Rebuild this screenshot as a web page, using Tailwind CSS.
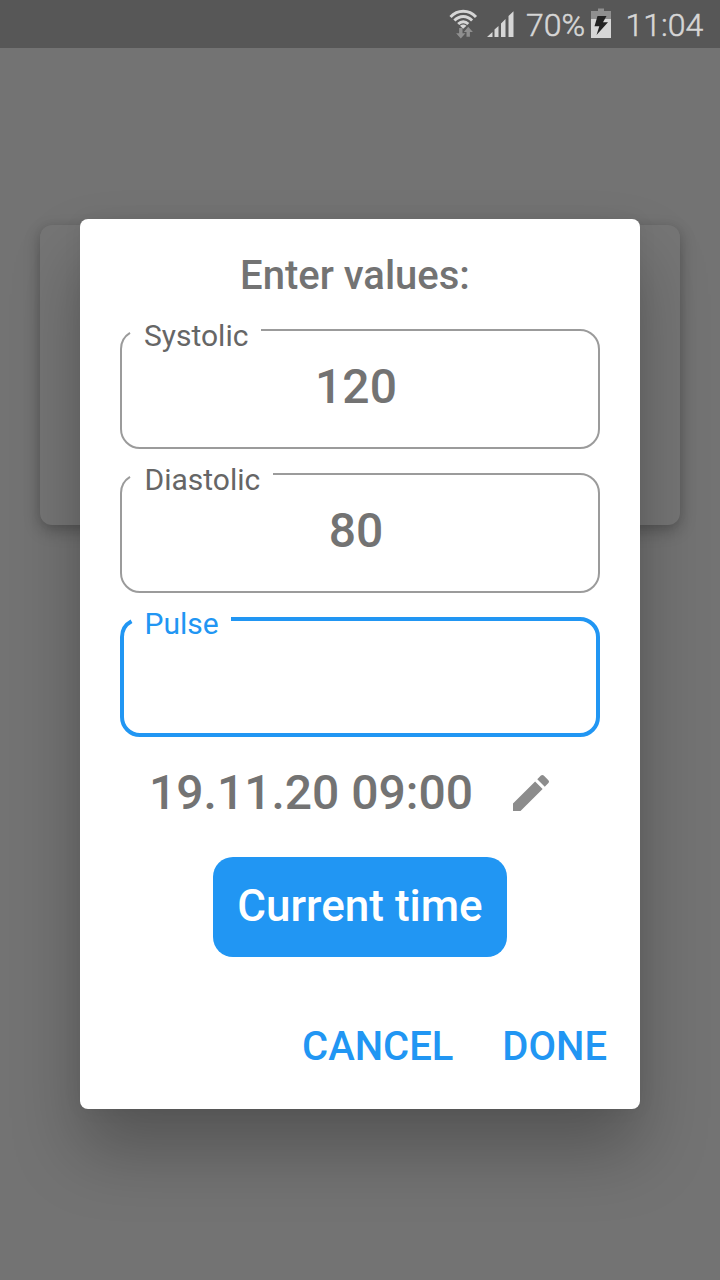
<!DOCTYPE html>
<html lang="en">
<head>
<meta charset="utf-8">
<title>Enter values</title>
<script src="https://cdn.jsdelivr.net/npm/@tailwindcss/browser@4"></script>
</head>
<body class="bg-[#737373] font-[Roboto,sans-serif]">
<div class="relative flex h-[1280px] w-[720px] flex-col overflow-hidden">
  <header class="flex h-12 shrink-0 items-center justify-end bg-[#575757] pr-4 text-[32px] font-light leading-[48px] text-[#d6d6d6] [-webkit-text-stroke:0.5px_#d6d6d6]">
    <svg class="mr-2 h-12 w-[30px]" viewBox="0 0 30 48" fill="none">
      <g stroke="#d6d6d6" stroke-width="2.9">
        <path d="M1.500 17C8.500 9.300 20 9.300 27 17"/>
        <path d="M5.400 20.600C10.500 15.200 18 15.200 23.100 20.600"/>
        <path d="M9.200 24C12.300 20.900 16.200 20.900 19.300 24"/>
      </g>
      <path d="M11 25.800Q14.200 23.400 17.500 25.800L14.200 28.800Z" fill="#d6d6d6"/>
      <path transform="translate(.8 0)" d="M9.300 28h3.400v5.300h3L11 38.600l-4.700-5.300h3zM16.700 36.800h3.400v-4.700h3L18.400 26.800l-4.300 5.300h2.600z" fill="#8f8f8f"/>
    </svg>
    <svg class="mr-3 h-12 w-[27px]" viewBox="0 0 27 48" fill="#d6d6d6">
      <path d="M0 37L5.500 32V37ZM7.500 37V29.500L11.500 26V37ZM14 37V23.500L18.500 19V37ZM21.500 37V16L26.500 11.300V37Z"/>
    </svg>
    <span class="w-[60px] whitespace-nowrap pt-[2px]">70%</span>
    <svg class="ml-[5px] h-12 w-5" viewBox="0 0 20 48">
      <path d="M0 11H7V8.500H13V11H20V20H0Z" fill="#8f8f8f"/>
      <path d="M0 19H20V38H0Z" fill="#d6d6d6"/>
      <path d="M6.500 16H15.500L12 22.300H17L5.500 35L8.300 26.300H3.500Z" fill="#222"/>
    </svg>
    <span class="ml-[14.500px] w-[78.500px] whitespace-nowrap pt-[2px]">11:04</span>
  </header>
  <div class="mx-10 mt-[177px] h-[300px] shrink-0 rounded-[12px] bg-[#757575] shadow-[0_6px_16px_0_rgba(0,0,0,0.26),0_0_8px_0_rgba(0,0,0,0.05)]"></div>

  <main class="absolute left-20 top-[219px] flex h-[890px] w-[560px] flex-col rounded-lg bg-white px-10 pt-[29px] font-medium text-[#737373] shadow-[0_42px_68px_0_rgba(0,0,0,0.26),0_0_20px_0_rgba(0,0,0,0.05)]">
    <h1 class="pr-[10px] text-center text-[40px] leading-[56px]">Enter values:</h1>
    <div class="mt-[25px] flex flex-col gap-6">
      <section class="relative h-[120px]">
        <svg class="absolute inset-0" width="480" height="120" fill="none" stroke="#9b9b9b" stroke-width="2"><path d="M141 1H460A19 19 0 0 1 479 20V100A19 19 0 0 1 460 119H20A19 19 0 0 1 1 100V20A19 19 0 0 1 10 3.900"/></svg>
        <label class="absolute left-6 top-[-11px] text-[30px] font-normal leading-9 text-[#666]">Systolic</label>
        <div class="pr-2 text-center text-[48px] leading-[116px]">120</div>
      </section>
      <section class="relative h-[120px]">
        <svg class="absolute inset-0" width="480" height="120" fill="none" stroke="#9b9b9b" stroke-width="2"><path d="M153 1H460A19 19 0 0 1 479 20V100A19 19 0 0 1 460 119H20A19 19 0 0 1 1 100V20A19 19 0 0 1 10 3.900"/></svg>
        <label class="absolute left-[24.500px] top-[-11px] text-[30px] font-normal leading-9 text-[#666]">Diastolic</label>
        <div class="pr-2 text-center text-[48px] leading-[116px]">80</div>
      </section>
      <section class="relative h-[120px]">
        <svg class="absolute inset-0" width="480" height="120" fill="none" stroke="#2196f3" stroke-width="4"><path d="M111 2H460A18 18 0 0 1 478 20V100A18 18 0 0 1 460 118H20A18 18 0 0 1 2 100V20A18 18 0 0 1 11.500 4.200"/></svg>
        <label class="absolute left-[24.500px] top-[-11px] text-[30px] font-normal leading-9 text-[#2196f3]">Pulse</label>
      </section>
    </div>
    <div class="mt-2 flex h-24 items-center pl-[29px] text-[48px] leading-[96px]">
      <span class="w-[358px] whitespace-nowrap">19.11.20 09:00</span>
      <svg class="size-12" viewBox="0 0 24 24" fill="#8c8c8c"><path d="M3 17.250V21h3.750L17.810 9.940l-3.750-3.750L3 17.250zM20.710 7.040a1 1 0 0 0 0-1.410l-2.340-2.340a1 1 0 0 0-1.410 0l-1.830 1.830 3.750 3.750 1.830-1.830z"/></svg>
    </div>
    <button class="mt-4 h-[100px] w-[294px] self-center rounded-[20px] bg-[#2196f3] pb-[2px] text-[44px] font-medium text-white">Current time</button>
    <div class="mt-[54px] -mr-[7px] flex justify-end gap-[49px] text-[40px] leading-[72px] text-[#2196f3]">
      <button>CANCEL</button><button>DONE</button>
    </div>
  </main>
</div>
</body>
</html>
